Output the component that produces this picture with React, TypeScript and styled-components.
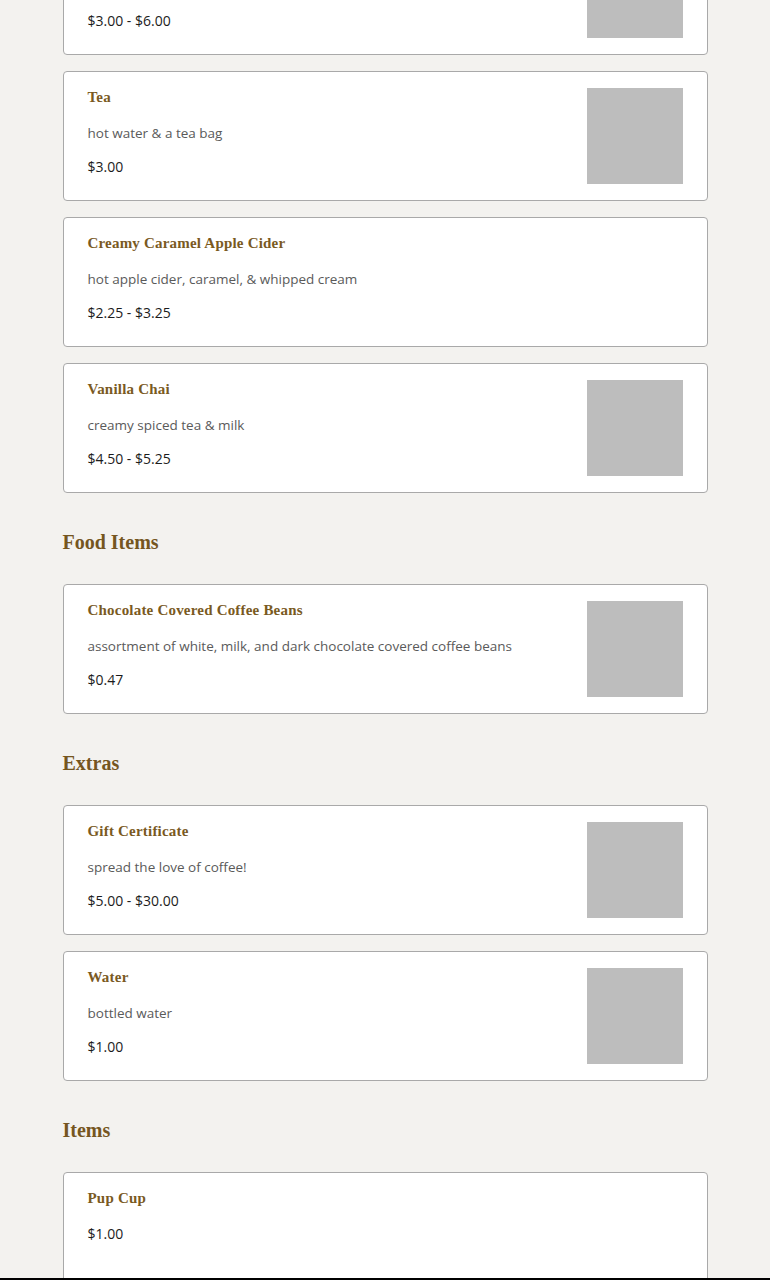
import React from "react";
import styled, { createGlobalStyle } from "styled-components";

const Global = createGlobalStyle`
  html, body { margin: 0; padding: 0; background: #f3f2ef; }
  body { font-family: "Open Sans", "Liberation Sans", sans-serif; overflow: hidden; }
`;

const Page = styled.div`
  width: 645px;
  margin: -75px auto 0;
  display: flex;
  flex-direction: column;
`;

const Section = styled.section`
  display: flex;
  flex-direction: column;
  gap: 16px;
`;

const Heading = styled.h2`
  margin: 35px 0 28px;
  font-family: "Liberation Serif", "DejaVu Serif", serif;
  font-weight: 700;
  font-size: 20px;
  line-height: 28px;
  color: #75561f;
`;

const Card = styled.div`
  box-sizing: border-box;
  background: #ffffff;
  border: 1px solid #a9a9a9;
  border-radius: 4px;
  padding: 16px 24px;
  display: flex;
  justify-content: space-between;
  min-height: 130px;
`;

const Info = styled.div`
  display: flex;
  flex-direction: column;
`;

const Title = styled.div`
  font-family: "Liberation Serif", "DejaVu Serif", serif;
  font-weight: 700;
  font-size: 15px;
  line-height: 18px;
  letter-spacing: 0.2px;
  color: #7a5a1f;
`;

const Desc = styled.div`
  margin-top: 17px;
  font-family: "Open Sans", "Liberation Sans", sans-serif;
  font-size: 13.5px;
  line-height: 20px;
  color: #5a5a5a;
`;

const Price = styled.div<{ $gap: number }>`
  margin-top: ${(p) => p.$gap}px;
  font-family: "Open Sans", "Liberation Sans", sans-serif;
  font-size: 14px;
  line-height: 20px;
  color: #1c1c1c;
`;

const Thumb = styled.div`
  width: 96px;
  height: 96px;
  flex: none;
  background: #bdbdbd;
`;

const BottomBar = styled.div`
  position: fixed;
  left: 0;
  right: 0;
  bottom: 0;
  height: 2px;
  background: #000;
`;

type Item = { title?: string; desc?: string; price: string; img?: boolean };

const Row = ({ item }: { item: Item }) => (
  <Card>
    <Info>
      {item.title && <Title>{item.title}</Title>}
      {item.desc && <Desc>{item.desc}</Desc>}
      <Price $gap={!item.title ? 69 : item.desc ? 14 : 17}>{item.price}</Price>
    </Info>
    {item.img && <Thumb />}
  </Card>
);

const sections: { name?: string; items: Item[] }[] = [
  {
    items: [
      { price: "$3.00 - $6.00", img: true },
      { title: "Tea", desc: "hot water & a tea bag", price: "$3.00", img: true },
      { title: "Creamy Caramel Apple Cider", desc: "hot apple cider, caramel, & whipped cream", price: "$2.25 - $3.25" },
      { title: "Vanilla Chai", desc: "creamy spiced tea & milk", price: "$4.50 - $5.25", img: true },
    ],
  },
  {
    name: "Food Items",
    items: [
      {
        title: "Chocolate Covered Coffee Beans",
        desc: "assortment of white, milk, and dark chocolate covered coffee beans",
        price: "$0.47",
        img: true,
      },
    ],
  },
  {
    name: "Extras",
    items: [
      { title: "Gift Certificate", desc: "spread the love of coffee!", price: "$5.00 - $30.00", img: true },
      { title: "Water", desc: "bottled water", price: "$1.00", img: true },
    ],
  },
  {
    name: "Items",
    items: [{ title: "Pup Cup", price: "$1.00" }],
  },
];

export default function App() {
  return (
    <>
      <Global />
      <Page>
        {sections.map((s, i) => (
          <React.Fragment key={i}>
            {s.name && <Heading>{s.name}</Heading>}
            <Section>
              {s.items.map((it, j) => (
                <Row key={j} item={it} />
              ))}
            </Section>
          </React.Fragment>
        ))}
      </Page>
      <BottomBar />
    </>
  );
}
